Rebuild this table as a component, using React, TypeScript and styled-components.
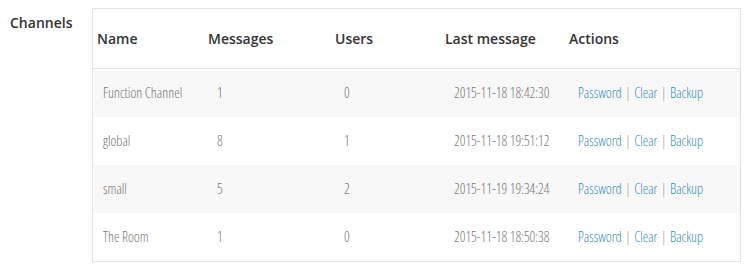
import React from 'react';
import styled, { createGlobalStyle } from 'styled-components';

const GlobalStyle = createGlobalStyle`
  body {
    margin: 0;
    background: #fff;
    font-family: "Open Sans", "Liberation Sans", sans-serif;
  }
`;

interface Channel {
  name: string;
  messages: number;
  users: number;
  last: string;
}

const channels: Channel[] = [
  { name: 'Function Channel', messages: 1, users: 0, last: '2015-11-18 18:42:30' },
  { name: 'global', messages: 8, users: 1, last: '2015-11-18 19:51:12' },
  { name: 'small', messages: 5, users: 2, last: '2015-11-19 19:34:24' },
  { name: 'The Room', messages: 1, users: 0, last: '2015-11-18 18:50:38' },
];

const Section = styled.div`
  display: flex;
  align-items: flex-start;
  padding: 8px 6px 0 10px;
`;

const Label = styled.div`
  width: 82px;
  flex-shrink: 0;
  font-size: 14px;
  font-weight: 600;
  color: #333;
  line-height: 20px;
  padding-top: 5px;
`;

const Panel = styled.div`
  flex: 1;
  border: 1px solid #e3e3e3;
`;

const Table = styled.table`
  width: 100%;
  border-collapse: collapse;
  table-layout: fixed;
`;

// widths below include the 4px left padding
const Th = styled.th<{ w?: number }>`
  box-sizing: border-box;
  width: ${p => (p.w ? `${p.w}px` : 'auto')};
  text-align: left;
  font-size: 14px;
  font-weight: 600;
  color: #333;
  height: 59px;
  padding: 0 0 0 4px;
  border-bottom: 1px solid #e3e3e3;
`;

const Row = styled.tr<{ striped?: boolean }>`
  background: ${p => (p.striped ? '#f8f8f8' : '#fff')};
`;

const Td = styled.td<{ first?: boolean }>`
  height: 48px;
  padding: 0 0 0 ${p => (p.first ? 10 : 13)}px;
  font-size: 14px;
  font-weight: 300;
  font-stretch: 75%;
  color: #777;
  white-space: nowrap;
`;

const Link = styled.a`
  color: #3b8dbd;
  text-decoration: none;
`;

const Sep = styled.span`
  color: #999;
  margin: 0 3.5px;
`;

const App: React.FC = () => {
  return (
    <>
      <GlobalStyle />
      <Section>
        <Label>Channels</Label>
        <Panel>
          <Table>
            <thead>
              <tr>
                <Th w={111}>Name</Th>
                <Th w={127}>Messages</Th>
                <Th w={110}>Users</Th>
                <Th w={124}>Last message</Th>
                <Th>Actions</Th>
              </tr>
            </thead>
            <tbody>
              {channels.map((c, i) => (
                <Row key={c.name} striped={i % 2 === 0}>
                  <Td first>{c.name}</Td>
                  <Td>{c.messages}</Td>
                  <Td>{c.users}</Td>
                  <Td>{c.last}</Td>
                  <Td>
                    <Link href="#">Password</Link>
                    <Sep>|</Sep>
                    <Link href="#">Clear</Link>
                    <Sep>|</Sep>
                    <Link href="#">Backup</Link>
                  </Td>
                </Row>
              ))}
            </tbody>
          </Table>
        </Panel>
      </Section>
    </>
  );
};

export default App;
